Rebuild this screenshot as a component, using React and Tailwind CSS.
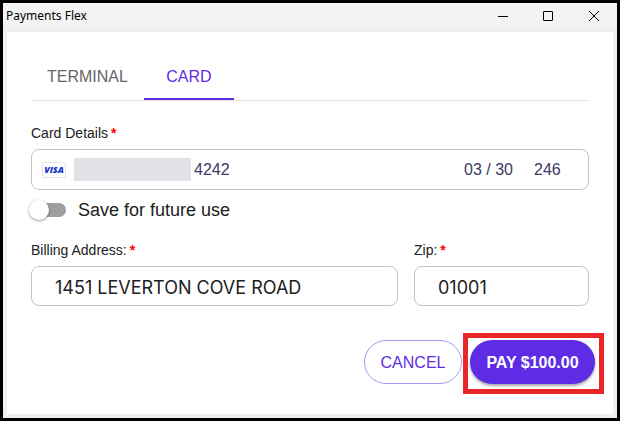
import { useState } from 'react';

const tabs = [
  { id: 'terminal', label: 'TERMINAL' },
  { id: 'card', label: 'CARD' },
];

function TitleBar() {
  return (
    <header className="flex h-[25px] items-center justify-between bg-[#f3f3f3] pl-[3px]">
      <h1 className="font-['Noto_Sans',sans-serif] text-[12px] leading-[25px] text-black">Payments Flex</h1>
      <div className="flex text-black">
        <button type="button" aria-label="Minimize" className="flex h-6 w-11 items-center justify-center">
          <svg width="10" height="10" viewBox="0 0 10 10" stroke="currentColor" shapeRendering="crispEdges">
            <path d="M0 5.5H10" />
          </svg>
        </button>
        <button type="button" aria-label="Maximize" className="flex h-6 w-[46px] items-center justify-center">
          <svg width="10" height="10" viewBox="0 0 10 10" fill="none" stroke="currentColor">
            <rect x="0.5" y="0.5" width="9" height="9" rx="0.5" />
          </svg>
        </button>
        <button type="button" aria-label="Close" className="flex h-6 w-[46px] items-center justify-center">
          <svg width="10" height="10" viewBox="0 0 10 10" fill="none" stroke="currentColor">
            <path d="M0 0L10 10M10 0L0 10" />
          </svg>
        </button>
      </div>
    </header>
  );
}

function FieldLabel({ htmlFor, children }) {
  return (
    <label htmlFor={htmlFor} className="mb-1.5 block text-[14px] leading-5 text-[#212121]">
      {children}
      <span className="ml-[3px] font-bold text-[#ff0000]">*</span>
    </label>
  );
}

export default function App() {
  const [activeTab, setActiveTab] = useState('card');
  const [saveCard, setSaveCard] = useState(false);
  const [form, setForm] = useState({
    number: '4242',
    expiry: '03 / 30',
    cvc: '246',
    address: '1451 LEVERTON COVE ROAD',
    zip: '01001',
  });

  const update = (e) => setForm({ ...form, [e.target.name]: e.target.value });

  return (
    <div className="flex min-h-screen flex-col border-[3px] border-black bg-[#f0f0f0] font-['Liberation_Sans',Arial,sans-serif]">
      <TitleBar />

      <main className="m-1 flex-1 bg-white pt-5">
        <form onSubmit={(e) => e.preventDefault()}>
          <div className="px-6">
            <div role="tablist" className="flex border-b border-[#e0e0e0]">
              {tabs.map(t => (
                <button
                  key={t.id}
                  type="button"
                  role="tab"
                  aria-selected={activeTab === t.id}
                  onClick={() => setActiveTab(t.id)}
                  className={`h-12 min-w-[90px] border-b-2 px-4 pt-1 text-base ${activeTab === t.id ? 'border-[#5e2ce5] text-[#5e2ce5]' : 'border-transparent text-[#666666]'}`}
                >
                  {t.label}
                </button>
              ))}
            </div>

            <div className="mt-[22px]">
              <FieldLabel htmlFor="number">Card Details</FieldLabel>
              <div className="flex h-[41px] items-center rounded-lg border border-[#c4c4c4] pr-3 pl-2.5 text-base text-[#3c3966]">
                <span className="flex h-4 w-6 shrink-0 items-center justify-center rounded-xs border border-[#e6e6ea] font-['Open_Sans',sans-serif] text-[9px] font-extrabold text-[#1434cb] italic">VISA</span>
                <span className="ml-2 h-[23px] w-[117px] shrink-0 bg-[#e2e1e8]" />
                <input id="number" name="number" value={form.number} onChange={update} className="ml-[3px] min-w-0 flex-1 outline-none" />
                <input name="expiry" aria-label="Expiry" value={form.expiry} onChange={update} className="w-[70px] outline-none" />
                <input name="cvc" aria-label="CVC" value={form.cvc} onChange={update} className="w-[42px] outline-none" />
              </div>
            </div>

            <label className="mt-2 flex h-6 items-center pl-px text-lg text-[#212121]">
              <span className="relative h-3.5 w-[34px] rounded-full bg-[#9e9e9e]">
                <input type="checkbox" role="switch" checked={saveCard} onChange={e => setSaveCard(e.target.checked)} className="peer absolute inset-0 opacity-0" />
                <span className="absolute -top-[3px] -left-[3px] size-5 rounded-full bg-white shadow-[0_1px_3px_rgba(0,0,0,0.4)] peer-checked:left-[17px]" />
              </span>
              <span className="ml-3">Save for future use</span>
            </label>

            <div className="mt-[18px] flex gap-4">
              <div className="min-w-0 flex-1">
                <FieldLabel htmlFor="address">Billing Address:</FieldLabel>
                <input id="address" name="address" value={form.address} onChange={update} className="h-10 w-full rounded-lg border border-[#c4c4c4] px-[23px] pt-0.5 font-['Inter',sans-serif] text-lg text-[#212121] outline-none" />
              </div>
              <div className="w-[175px]">
                <FieldLabel htmlFor="zip">Zip:</FieldLabel>
                <input id="zip" name="zip" value={form.zip} onChange={update} className="h-10 w-full rounded-lg border border-[#c4c4c4] px-[23px] pt-0.5 font-['Inter',sans-serif] text-lg text-[#212121] outline-none" />
              </div>
            </div>
          </div>

          <div className="mt-[34px] flex justify-end gap-2 pr-[18px]">
            <button type="button" className="h-11 w-[98px] rounded-full border border-[#ae95f2] pt-0.5 text-base text-[#5e2ce5]">CANCEL</button>
            <div className="relative">
              <button type="submit" className="h-11 w-[125px] rounded-full bg-[#5e2ce5] pt-0.5 text-base font-bold text-white shadow-[0_2px_3px_rgba(0,0,0,0.35)]">PAY $100.00</button>
              {/* callout around the pay button */}
              <span className="pointer-events-none absolute -top-[7px] -right-[9px] -bottom-[10px] -left-[7px] border-5 border-[#eb2629]" />
            </div>
          </div>
        </form>
      </main>
    </div>
  );
}
